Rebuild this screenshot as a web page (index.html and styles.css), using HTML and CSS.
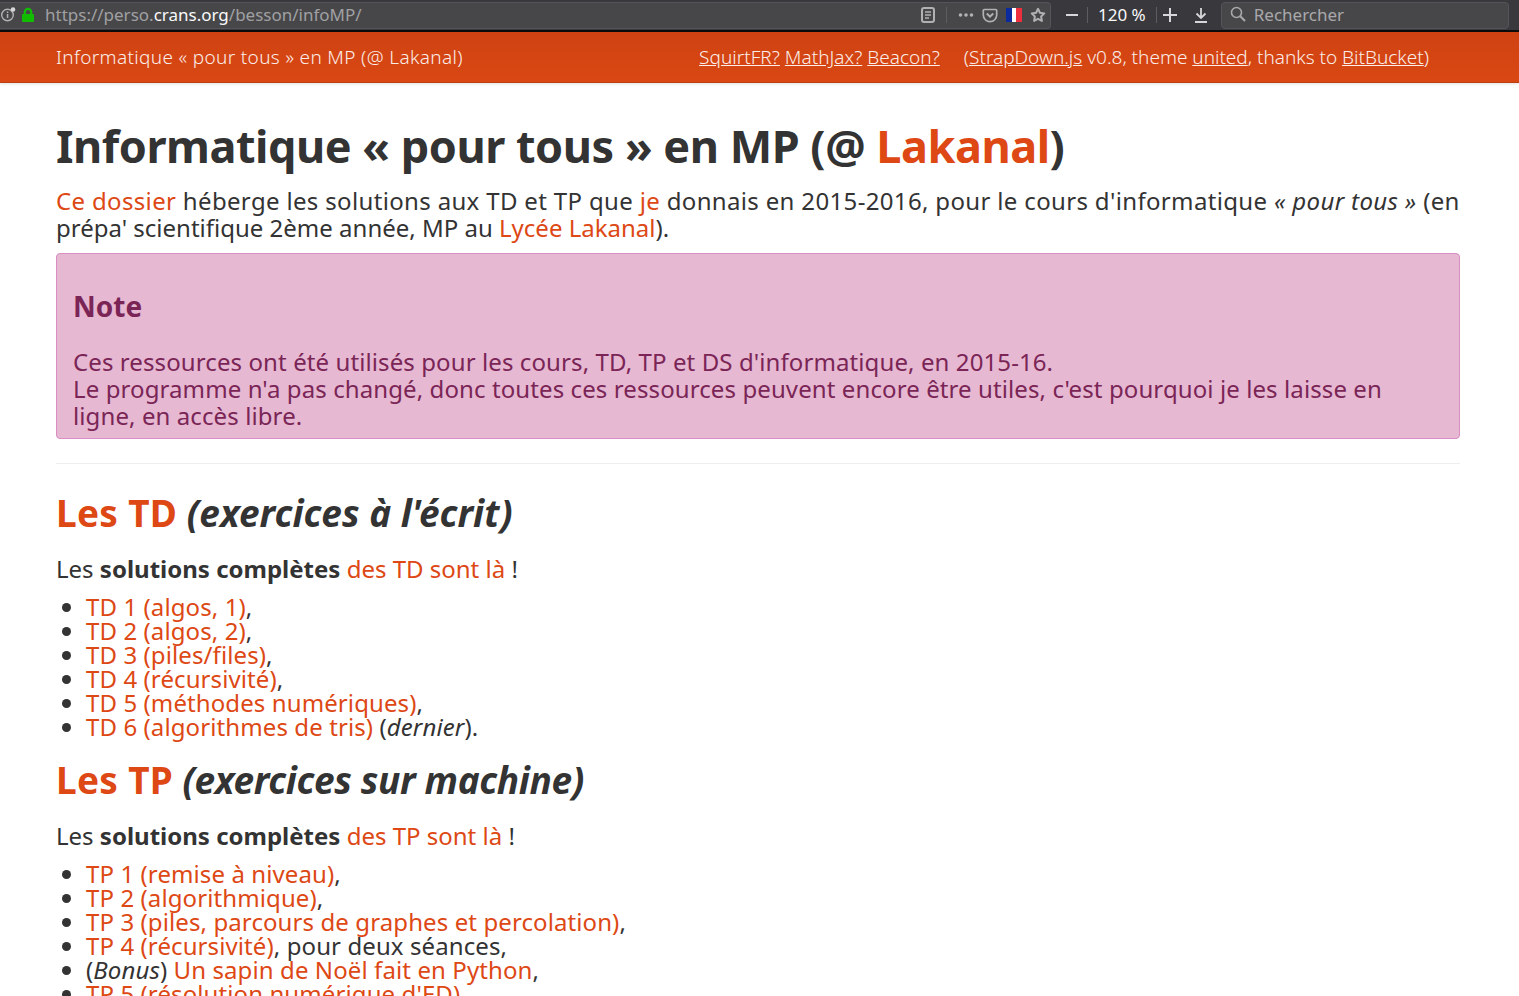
FILE: index.html
```html
<!DOCTYPE html>
<html lang="fr">
<head>
<meta charset="utf-8">
<title>Informatique « pour tous » en MP (@ Lakanal)</title>
<link rel="stylesheet" href="styles.css">
</head>
<body>
<header class="chrome">
  <div class="urlbar">
    <svg class="ic-info" width="18" height="18" viewBox="0 0 18 18"><circle cx="7.500" cy="9" r="5.800" fill="none" stroke="#b1b1b3" stroke-width="1.400"/><rect x="6.800" y="8" width="1.500" height="4" fill="#b1b1b3"/><rect x="6.800" y="5.500" width="1.500" height="1.500" fill="#b1b1b3"/><circle cx="13" cy="3.500" r="2.300" fill="#d7d7d9"/></svg>
    <svg class="ic-lock" width="14" height="16" viewBox="0 0 14 16"><path d="M3.800 8V5a3.200 3.200 0 0 1 6.400 0v3" fill="none" stroke="#12bc00" stroke-width="2.200"/><rect x="1" y="7" width="12" height="8" rx="1" fill="#12bc00"/></svg>
    <span class="url">https://perso.<b>crans.org</b>/besson/infoMP/</span>
    <span class="url-actions">
      <svg width="14" height="16" viewBox="0 0 14 16"><rect x="1" y="1" width="12" height="14" rx="2" fill="none" stroke="#b1b1b3" stroke-width="2"/><path d="M4 5h6M4 8h6M4 11h4" stroke="#b1b1b3" stroke-width="1.300"/></svg>
      <i class="sep sep-actions"></i>
      <svg width="16" height="6" viewBox="0 0 16 6"><circle cx="2.500" cy="3" r="1.800" fill="#b1b1b3"/><circle cx="8" cy="3" r="1.800" fill="#b1b1b3"/><circle cx="13.500" cy="3" r="1.800" fill="#b1b1b3"/></svg>
      <svg width="16" height="15" viewBox="0 0 16 15"><path d="M2.300 1.500h11.400a1 1 0 0 1 1 1V7a6.700 6.700 0 0 1-13.400 0V2.500a1 1 0 0 1 1-1z" fill="none" stroke="#b1b1b3" stroke-width="1.700"/><path d="M4.800 5.500L8 8.700l3.200-3.200" fill="none" stroke="#b1b1b3" stroke-width="2"/></svg>
      <svg width="16" height="14" viewBox="0 0 16 14"><rect width="6" height="14" fill="#0a2a9e"/><rect x="6" width="4" height="14" fill="#fff"/><rect x="10" width="6" height="14" fill="#ee2f3e"/></svg>
      <svg width="16" height="16" viewBox="0 0 16 16"><path d="M8 1.800l1.900 4 4.400.6-3.200 3.100.8 4.400L8 11.800l-3.900 2.100.8-4.400-3.200-3.100 4.400-.6z" fill="none" stroke="#b1b1b3" stroke-width="2" stroke-linejoin="round"/></svg>
    </span>
  </div>
  <div class="zoom">
    <svg width="12" height="2" viewBox="0 0 12 2"><rect width="12" height="2" fill="#d7d7d9"/></svg>
    <i class="sep"></i>
    <span class="zoom-val">120 %</span>
    <i class="sep"></i>
    <svg class="ic-plus" width="14" height="14" viewBox="0 0 14 14"><path d="M7 0v14M0 7h14" stroke="#d7d7d9" stroke-width="2"/></svg>
  </div>
  <svg class="ic-dl" width="14" height="16" viewBox="0 0 14 16"><path d="M7 1v10M2.500 6.500L7 11l4.500-4.500" fill="none" stroke="#d7d7d9" stroke-width="1.800"/><path d="M1 15h12" stroke="#d7d7d9" stroke-width="2"/></svg>
  <div class="search">
    <svg width="16" height="16" viewBox="0 0 16 16"><circle cx="6.500" cy="6.500" r="5" fill="none" stroke="#a9a9ab" stroke-width="1.600"/><path d="M10.300 10.300L15 15" stroke="#a9a9ab" stroke-width="2"/></svg>
    <span>Rechercher</span>
  </div>
</header>

<nav class="navbar">
  <span class="brand">Informatique « pour tous » en MP (@ Lakanal)</span>
  <span class="nav-links">
    <span class="nav-q"><a href="#">SquirtFR?</a> <a href="#">MathJax?</a> <a href="#">Beacon?</a></span>
    <span class="nav-credit">(<a href="#">StrapDown.js</a> v0.8, theme <a href="#">united</a>, thanks to <a href="#">BitBucket</a>)</span>
  </span>
</nav>

<main class="content">
  <h1 class="title">Informatique « pour tous » en MP (@ <a href="#">Lakanal</a>)</h1>
  <p class="intro"><span class="intro-wide"><a href="#">Ce dossier</a> héberge les solutions aux TD et TP que <a href="#">je</a> donnais en 2015-2016, pour le cours d'informatique <em>« pour tous »</em> (en</span> prépa' scientifique 2ème année, MP au <a href="#">Lycée Lakanal</a>).</p>
  <section class="note">
    <h4 class="note-title">Note</h4>
    <p class="note-text">Ces ressources ont été utilisés pour les cours, TD, TP et DS d'informatique, en 2015-16.<br>Le programme n'a pas changé, donc toutes ces ressources peuvent encore être utiles, c'est pourquoi je les laisse en ligne, en accès libre.</p>
  </section>
  <hr class="rule">
  <h2 class="section-title first"><a href="#">Les TD</a> <em>(exercices à l'écrit)</em></h2>
  <p class="lead">Les <strong>solutions complètes</strong> <a href="#">des TD sont là</a> !</p>
  <ul class="items">
    <li><a href="#">TD 1 (algos, 1)</a>,</li>
    <li><a href="#">TD 2 (algos, 2)</a>,</li>
    <li><a href="#">TD 3 (piles/files)</a>,</li>
    <li><a href="#">TD 4 (récursivité)</a>,</li>
    <li><a href="#">TD 5 (méthodes numériques)</a>,</li>
    <li><a href="#">TD 6 (algorithmes de tris)</a> (<em>dernier</em>).</li>
  </ul>
  <h2 class="section-title second"><a href="#">Les TP</a> <em>(exercices sur machine)</em></h2>
  <p class="lead">Les <strong>solutions complètes</strong> <a href="#">des TP sont là</a> !</p>
  <ul class="items">
    <li><a href="#">TP 1 (remise à niveau)</a>,</li>
    <li><a href="#">TP 2 (algorithmique)</a>,</li>
    <li><a href="#">TP 3 (piles, parcours de graphes et percolation)</a>,</li>
    <li><a href="#">TP 4 (récursivité)</a>, pour deux séances,</li>
    <li>(<em>Bonus</em>) <a href="#">Un sapin de Noël fait en Python</a>,</li>
    <li><a href="#">TP 5 (résolution numérique d'ED)</a></li>
  </ul>
</main>
</body>
</html>
```

FILE: styles.css
```css
html, body { margin: 0; height: 996px; overflow: hidden; background: #fff; }
body { font-family: "Noto Sans", "Open Sans", sans-serif; color: #333; }
a { color: #dd4814; text-decoration: none; }

.chrome { height: 30px; background: #38383d; border-bottom: 2px solid #0c0c0d; display: flex; align-items: center; font-size: 17px; }
.chrome svg { flex: none; }
.urlbar { flex: none; width: 1051px; height: 27px; background: #474749; border: 1px solid #555559; border-left: 0; border-radius: 0 4px 4px 0; display: flex; align-items: center; box-sizing: border-box; }
.ic-lock { margin-left: 3px; }
.url { margin: 0 0 2px 10px; color: #a0a0a3; }
.url b { font-weight: 400; color: #f9f9fa; }
.url-actions { margin-left: auto; display: flex; align-items: center; gap: 8px; padding-right: 4px; }
.sep { display: block; width: 1px; height: 16px; background: #5c5c61; }
.sep-actions { margin: 0 3px; }
.zoom { flex: none; display: flex; align-items: center; gap: 9px; margin-left: 15px; }
.zoom-val { color: #f9f9fa; margin: 0 1px 2px; }
.chrome .ic-plus { margin-left: -3px; }
.ic-dl { margin-left: 17px; }
.search { flex: none; width: 288px; height: 27px; margin-left: 13px; background: #474749; border: 1px solid #555559; border-radius: 4px; display: flex; align-items: center; gap: 8px; padding: 0 0 2px 8px; box-sizing: border-box; color: #a9a9ab; }

.navbar { height: 51px; background: linear-gradient(#cf4212, #d94814); border-bottom: 1px solid #bf3e11; box-sizing: border-box; padding: 0 90px 0 56px; display: flex; align-items: center; justify-content: space-between; font-size: 19px; font-weight: 300; box-shadow: 0 1px 3px rgba(0,0,0,.12); color: #fbeee9; }
.brand { letter-spacing: .35px; }
.nav-links { display: flex; gap: 24px; }
.nav-q { letter-spacing: .03px; }
.navbar a { color: #fbeee9; text-decoration: underline; }

.content { padding: 0 59px 0 56px; }
.title { margin: 36px 0 0; font-size: 45px; line-height: 54px; font-weight: 700; color: #333; letter-spacing: -.47px; }
.intro { margin: 14px 0 0; font-size: 24px; line-height: 27px; }
.intro-wide { letter-spacing: .34px; }
.note { margin-top: 12px; background: #e6b8d2; border: 1px solid #d98dc0; border-radius: 4px; padding: 24px 40px 8px 16px; color: #7a2556; height: 186px; box-sizing: border-box; }
.note-title { margin: 0; font-size: 28px; line-height: 57px; height: 70px; font-weight: 700; }
.note-text { margin: 0; font-size: 24px; line-height: 27px; letter-spacing: .1px; }
.rule { margin: 24px 0 0; border: 0; border-top: 1px solid #eee; }
.section-title { margin: 25px 0 0; font-size: 37px; line-height: 50px; font-weight: 700; letter-spacing: -.35px; }
.section-title a { letter-spacing: .3px; }
.section-title.first { margin-top: 24px; letter-spacing: 0; }
.section-title.second { margin-top: 16px; }
.lead { margin: 17px 0 0; font-size: 24px; line-height: 27px; }
.items { margin: 13px 0 0; padding: 0 0 0 30px; font-size: 24px; line-height: 24px; letter-spacing: .1px; }
.items li { height: 24px; white-space: nowrap; }
```
